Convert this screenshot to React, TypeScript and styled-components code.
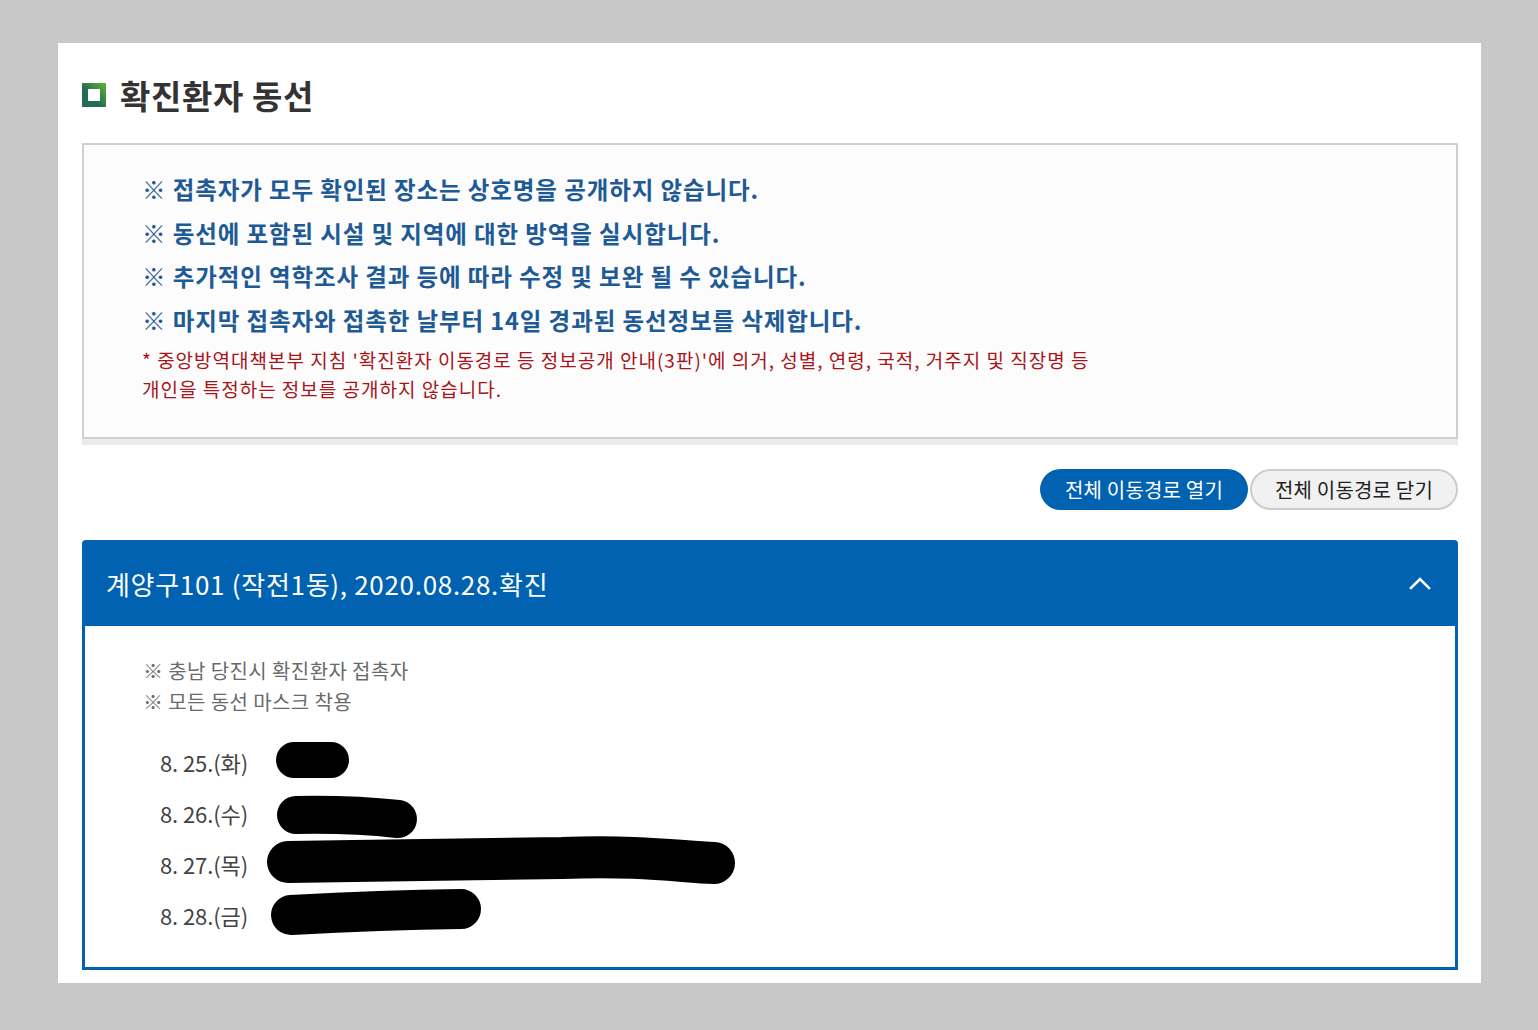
import React from 'react';
import styled, { createGlobalStyle } from 'styled-components';

const GlobalStyle = createGlobalStyle`
  html, body {
    margin: 0;
    padding: 0;
    background: #c8c8c8;
    font-family: "Noto Sans CJK KR", "Noto Sans", sans-serif;
  }
`;

const Page = styled.div`
  width: 1538px;
  height: 1030px;
  padding: 43px 57px 0 58px;
  box-sizing: border-box;
`;

const Panel = styled.div`
  background: #fff;
  padding: 29px 23px 14px 24px;
  box-sizing: border-box;
  height: 940px;
`;

const Title = styled.h2`
  display: flex;
  align-items: center;
  gap: 14px;
  margin: 0 0 25px;
  height: 46px;
  font-size: 33px;
  font-weight: 700;
  color: #333;
  letter-spacing: 0.6px;
`;

const TitleMark = styled.span`
  width: 24px;
  height: 24px;
  background: linear-gradient(225deg, #66b32e 0%, #3c8a45 35%, #256b52 60%);
  display: flex;
  align-items: center;
  justify-content: center;
  flex: none;

  &::after {
    content: '';
    width: 12px;
    height: 12px;
    background: #fff;
  }
`;

const Notice = styled.div`
  border: 2px solid #cfcfcf;
  background: #fcfcfc;
  padding: 23px 58px 34px;
  box-shadow: 0 6px 0 #ebebeb;
`;

const NoticeLine = styled.p`
  margin: 0;
  font-size: 23.5px;
  line-height: 43.5px;
  font-weight: 700;
  color: #1e5a96;
  letter-spacing: 0.9px;
`;

const RedNote = styled.p`
  margin: 3px 0 0;
  font-size: 19px;
  line-height: 29px;
  color: #a8141a;
  letter-spacing: 1px;
  max-width: 965px;
`;

const ButtonRow = styled.div`
  display: flex;
  justify-content: flex-end;
  gap: 2px;
  margin: 30px 0 30px;
`;

const PillButton = styled.button<{ $primary?: boolean }>`
  width: 208px;
  height: 41px;
  border-radius: 21px;
  font-family: inherit;
  font-size: 20px;
  letter-spacing: 0.2px;
  cursor: pointer;
  border: ${(p) => (p.$primary ? 'none' : '2px solid #cccccc')};
  background: ${(p) => (p.$primary ? '#0062b1' : '#f1f1f1')};
  color: ${(p) => (p.$primary ? '#fff' : '#222')};
`;

const Accordion = styled.section`
  display: flex;
  flex-direction: column;
`;

const AccordionHeader = styled.div`
  height: 86px;
  background: #0062b1;
  border-radius: 4px 4px 0 0;
  display: flex;
  align-items: center;
  justify-content: space-between;
  padding: 0 26px 0 24px;
  color: #fff;
  font-size: 26px;
  letter-spacing: 0.7px;
`;

const AccordionBody = styled.div`
  border: 3px solid #0062b1;
  border-top: none;
  padding: 29px 58px 27px;
`;

const SubNote = styled.p`
  margin: 0;
  font-size: 20px;
  line-height: 31px;
  color: #6a6a6a;
  letter-spacing: 0.4px;
`;

const DateList = styled.ul`
  list-style: none;
  margin: 19px 0 0;
  padding: 0 0 0 17px;
`;

const DateRow = styled.li`
  height: 51px;
  display: flex;
  align-items: center;
`;

const DateLabel = styled.span`
  width: 102px;
  font-size: 22px;
  color: #444;
  letter-spacing: -0.1px;
  flex: none;
`;

const Redaction = styled.svg`
  overflow: visible;
  flex: none;
`;

const rows = [
  { label: '8. 25.(화)', d: 'M32 24 L69 24', w: 36 },
  { label: '8. 26.(수)', d: 'M34 28 Q90 27 136 32', w: 38 },
  { label: '8. 27.(목)', d: 'M26 24 C120 22 220 22 300 20 C380 17 420 24 452 25', w: 42 },
  { label: '8. 28.(금)', d: 'M29 26 Q120 21 199 20', w: 40 },
];

function ChevronUp() {
  return (
    <svg width="24" height="16" viewBox="0 0 24 16" fill="none">
      <path d="M3 13 L12 4 L21 13" stroke="#fff" strokeWidth="2.6" strokeLinecap="square" />
    </svg>
  );
}

export default function App() {
  return (
    <Page>
      <GlobalStyle />
      <Panel>
        <Title>
          <TitleMark />
          확진환자 동선
        </Title>

        <Notice>
          <NoticeLine>※ 접촉자가 모두 확인된 장소는 상호명을 공개하지 않습니다.</NoticeLine>
          <NoticeLine>※ 동선에 포함된 시설 및 지역에 대한 방역을 실시합니다.</NoticeLine>
          <NoticeLine>※ 추가적인 역학조사 결과 등에 따라 수정 및 보완 될 수 있습니다.</NoticeLine>
          <NoticeLine>※ 마지막 접촉자와 접촉한 날부터 14일 경과된 동선정보를 삭제합니다.</NoticeLine>
          <RedNote>
            * 중앙방역대책본부 지침 '확진환자 이동경로 등 정보공개 안내(3판)'에 의거, 성별, 연령, 국적, 거주지 및 직장명 등
            개인을 특정하는 정보를 공개하지 않습니다.
          </RedNote>
        </Notice>

        <ButtonRow>
          <PillButton $primary>전체 이동경로 열기</PillButton>
          <PillButton>전체 이동경로 닫기</PillButton>
        </ButtonRow>

        <Accordion>
          <AccordionHeader>
            <span>계양구101 (작전1동), 2020.08.28.확진</span>
            <ChevronUp />
          </AccordionHeader>
          <AccordionBody>
            <SubNote>※ 충남 당진시 확진환자 접촉자</SubNote>
            <SubNote>※ 모든 동선 마스크 착용</SubNote>
            <DateList>
              {rows.map((r) => (
                <DateRow key={r.label}>
                  <DateLabel>{r.label}</DateLabel>
                  <Redaction width="480" height="51" viewBox="0 0 480 51">
                    <path d={r.d} stroke="#000" strokeWidth={r.w} strokeLinecap="round" fill="none" />
                  </Redaction>
                </DateRow>
              ))}
            </DateList>
          </AccordionBody>
        </Accordion>
      </Panel>
    </Page>
  );
}
